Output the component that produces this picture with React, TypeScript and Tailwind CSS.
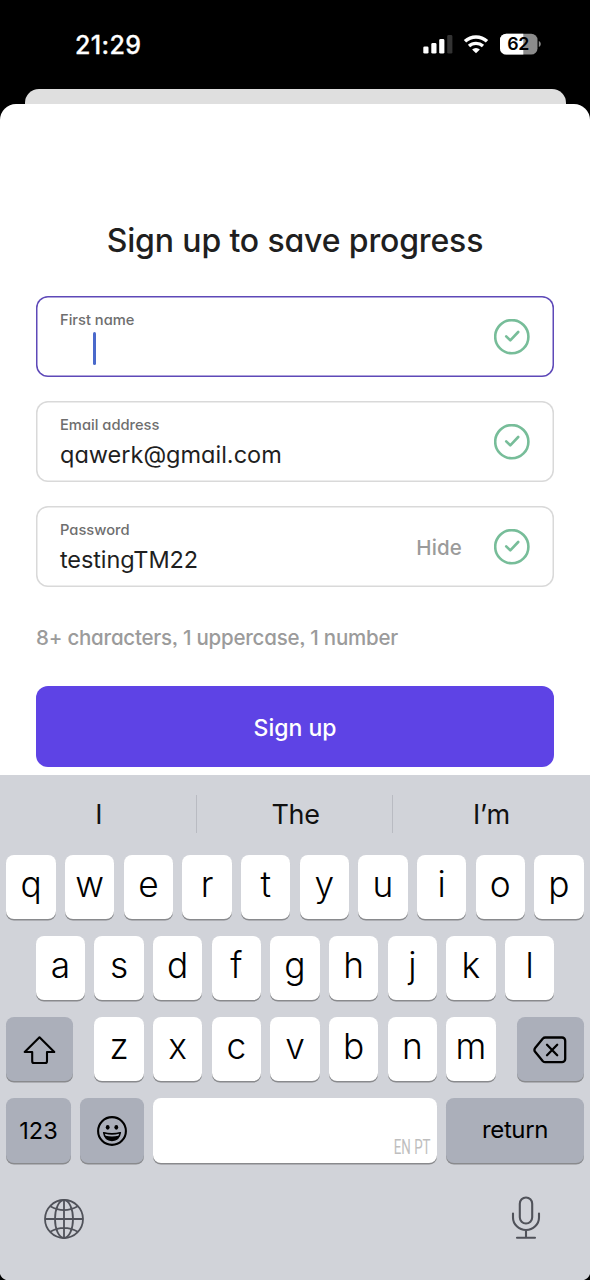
import type { ReactNode } from "react";

function StatusBar() {
  return (
    <div className="flex h-[89px] items-start justify-between pt-[30px] pr-[48px] pl-[75px] text-white">
      <div className="h-[30px] w-[70px] text-[25px] leading-[30px] font-medium tracking-[0.4px] whitespace-nowrap [-webkit-text-stroke:0.3px_white]">21:29</div>
      <svg className="mt-[2px]" width="119" height="24" viewBox="423 32 119 24" fill="none">
        <rect x="423.3" y="46.4" width="5.2" height="7.2" rx="1.4" fill="#fff" />
        <rect x="431.3" y="43" width="5.2" height="10.6" rx="1.4" fill="#fff" />
        <rect x="439.2" y="39" width="5.2" height="14.6" rx="1.4" fill="#fff" />
        <rect x="447.2" y="35" width="5.2" height="18.6" rx="1.4" fill="#333" />
        <path d="M465 41.3a16.4 16.4 0 0 1 22 0" stroke="#fff" strokeWidth="3.5" />
        <path d="M469 46a10.4 10.4 0 0 1 14 0" stroke="#fff" strokeWidth="3.3" />
        <path d="M476 53.2l-3.9-3.8a5.8 5.8 0 0 1 7.8 0z" fill="#fff" />
        <clipPath id="battery">
          <rect x="500" y="33.7" width="37.5" height="20.8" rx="6.3" />
        </clipPath>
        <g clipPath="url(#battery)">
          <rect x="500" y="33" width="38" height="22" fill="#8c8c8c" />
          <rect x="500" y="33" width="23.3" height="22" fill="#fff" />
        </g>
        <path d="M538.8 41v6c2.6-1 2.6-5 0-6z" fill="#8c8c8c" />
        <text x="518.2" y="50.4" textAnchor="middle" fontSize="17.8" fontWeight="600" letterSpacing="-0.4" fill="#000">62</text>
      </svg>
    </div>
  );
}

function Check() {
  return (
    <svg width="36" height="36" viewBox="0 0 36 36" fill="none" stroke="#77bd99" strokeLinecap="round" strokeLinejoin="round">
      <circle cx="17.8" cy="17.7" r="16.6" strokeWidth="2.6" />
      <path d="M12.2 17.3l4.1 4.1 7.9-8.4" strokeWidth="2.6" />
    </svg>
  );
}

function Field({ label, active, action, children }: { label: string; active?: boolean; action?: string; children?: ReactNode }) {
  return (
    <div className={`flex h-[81px] items-center rounded-[12px] pr-[24px] pl-[24px] ${active ? "shadow-[inset_0_0_0_1.5px_#5e49b8]" : "shadow-[inset_0_0_0_1.5px_#d9d9d9]"}`}>
      <div className="flex h-full flex-1 flex-col pt-[14px]">
        <div className="text-[14.7px] leading-[20px] font-medium text-[#6e6e6e]">{label}</div>
        {children}
      </div>
      {action && <div className="mt-[3px] mr-[32px] text-[20.5px] font-medium tracking-[0.15px] text-[#9b9b9b]">{action}</div>}
      <Check />
    </div>
  );
}

function Key({ children, className = "" }: { children?: ReactNode; className?: string }) {
  return (
    <div className={`flex h-[64.3px] shrink-0 items-center justify-center rounded-[8px] shadow-[0_1.5px_0_#898a8d] ${className}`}>{children}</div>
  );
}

function Letters({ letters }: { letters: string }) {
  return (
    <div className="flex gap-[9.25px]">
      {letters.split("").map((l) => (
        <Key key={l} className="w-[49.4px] bg-white pb-[5px] text-[35.3px] leading-none font-[340]">
          {l}
        </Key>
      ))}
    </div>
  );
}

function Keyboard() {
  return (
    <div className="relative h-[505px] overflow-hidden bg-[#d1d3d9] text-black">
      <div className="flex h-[80px] items-center text-center text-[27px] text-[#111]">
        <div className="w-[196px] pl-[2px]">I</div>
        <div className="relative -top-px h-[38px] w-px bg-[#b9bbc2]" />
        <div className="w-[195px] pl-[2px] tracking-[-0.3px]">The</div>
        <div className="relative -top-px h-[38px] w-px bg-[#b9bbc2]" />
        <div className="flex-1 tracking-[-0.1px]">I’m</div>
      </div>
      <div className="flex flex-col gap-[16.8px] px-[6.4px]">
        <Letters letters="qwertyuiop" />
        <div className="flex justify-center">
          <Letters letters="asdfghjkl" />
        </div>
        <div className="flex justify-between">
          <Key className="w-[66.5px] bg-[#abafba] pt-[2px]">
            <svg width="34" height="30" viewBox="0 0 34 30" fill="none" stroke="#000" strokeWidth="2.1" strokeLinejoin="round">
              <path d="M16.5 2.3L31.3 17H24V26.2Q24 28 22.2 28H11Q9.2 28 9.2 26.2V17H1.7Z" />
            </svg>
          </Key>
          <Letters letters="zxcvbnm" />
          <Key className="w-[66.5px] bg-[#abafba] pt-[2px]">
            <svg width="34" height="28" viewBox="0 0 34 28" fill="none" stroke="#000" strokeWidth="2.3" strokeLinecap="round" strokeLinejoin="round">
              <path d="M12.3 1.5H29a3.2 3.2 0 0 1 3.2 3.2V23a3.2 3.2 0 0 1-3.2 3.2H12.3a3.5 3.5 0 0 1-2.4-1L2.3 16a3.3 3.3 0 0 1 0-4.2L9.9 2.5a3.5 3.5 0 0 1 2.4-1z" />
              <path d="M14 8.8l10.2 10.4M24.2 8.8L14 19.2" />
            </svg>
          </Key>
        </div>
        <div className="flex gap-[9.3px]">
          <Key className="w-[64.2px] bg-[#abafba] text-[23.5px]">123</Key>
          <Key className="w-[64px] bg-[#abafba] pt-px">
            <svg width="32" height="32" viewBox="0 0 32 32" fill="none">
              <circle cx="16" cy="16" r="13.9" stroke="#000" strokeWidth="2.1" />
              <ellipse cx="11.7" cy="12.3" rx="1.9" ry="2.4" fill="#000" />
              <ellipse cx="20.3" cy="12.3" rx="1.9" ry="2.4" fill="#000" />
              <path d="M7.5 17.5Q16 19.8 24.5 17.5Q23.3 25.6 16 25.6T7.5 17.5Z" fill="#000" stroke="#000" strokeWidth="1.2" strokeLinejoin="round" />
              <path d="M8.8 18.7Q16 20.7 23.2 18.7L22.4 20.8Q16 22.4 9.6 20.8Z" fill="#abafba" />
            </svg>
          </Key>
          <Key className="w-[284px] items-end justify-end bg-white pr-[7px] pb-[4px]">
            <div className="origin-right scale-x-[0.65] font-['Roboto',sans-serif] text-[20.5px] leading-[24px] whitespace-nowrap text-[#bebebe]">EN PT</div>
          </Key>
          <Key className="flex-1 bg-[#abafba] text-[24px] tracking-[-0.4px]">return</Key>
        </div>
      </div>
      <div className="mt-[33.5px] flex items-start justify-between pr-[48px] pl-[43px]">
        <svg className="mt-[2px]" width="42" height="42" viewBox="0 0 42 42" fill="none" stroke="#50525a" strokeWidth="1.8">
          <circle cx="21" cy="21" r="19" />
          <ellipse cx="21" cy="21" rx="9" ry="19" />
          <path d="M21 2v38M2 21h38M7.3 8.2Q21 16 34.7 8.2M7.3 33.8Q21 26 34.7 33.8" />
        </svg>
        <svg width="32" height="46" viewBox="0 0 32 46" fill="none" stroke="#50525a" strokeWidth="2.1" strokeLinecap="round">
          <rect x="9.8" y="1.5" width="12.4" height="26" rx="6.2" />
          <path d="M3 17.5v4a13 12.5 0 0 0 26 0v-4M16 34v7.8M7 41.8h18" />
        </svg>
      </div>
      <svg className="absolute bottom-0 left-0" width="6" height="6" viewBox="0 0 6 6"><path d="M0 0Q1.5 4.5 6 6H0Z" fill="#000" /></svg>
      <svg className="absolute right-0 bottom-0" width="6" height="6" viewBox="0 0 6 6"><path d="M6 0Q4.5 4.5 0 6H6Z" fill="#000" /></svg>
    </div>
  );
}

export default function App() {
  return (
    <div className="h-[1280px] w-[590px] overflow-hidden bg-black font-['Inter',sans-serif]">
      <StatusBar />
      <div className="mx-[24.5px] h-[15px] rounded-t-[14px] bg-[#dfdfdf]" />
      <div className="h-[671px] rounded-t-[16px] bg-white px-[36px] pt-[115px] font-['Inter','Lato',sans-serif] text-[#1f1f1f] [font-feature-settings:'cv11','ss03']">
        <h1 className="text-center text-[32px] leading-[44px] font-medium tracking-[-0.15px] whitespace-nowrap">Sign up to save progress</h1>
        <div className="mt-[33px] flex flex-col gap-[24px]">
          <Field label="First name" active>
            <div className="mt-[2px] ml-[33px] h-[33px] w-[3px] rounded-full bg-[#4a69cb]" />
          </Field>
          <Field label="Email address">
            <div className="text-[23.5px] leading-[40px] whitespace-nowrap">qawerk@gmail.com</div>
          </Field>
          <Field label="Password" action="Hide">
            <div className="text-[23.5px] leading-[40px] tracking-[-0.1px] whitespace-nowrap">testingTM22</div>
          </Field>
        </div>
        <p className="mt-[37px] text-[20.5px] leading-[28px] font-medium tracking-[-0.22px] whitespace-nowrap text-[#9b9b9b]">8+ characters, 1 uppercase, 1 number</p>
        <div className="mt-[34px] flex h-[81px] items-center justify-center rounded-[12px] bg-[#5e43e5] pt-[3px] text-[23px] font-medium text-white">Sign up</div>
      </div>
      <Keyboard />
    </div>
  );
}
